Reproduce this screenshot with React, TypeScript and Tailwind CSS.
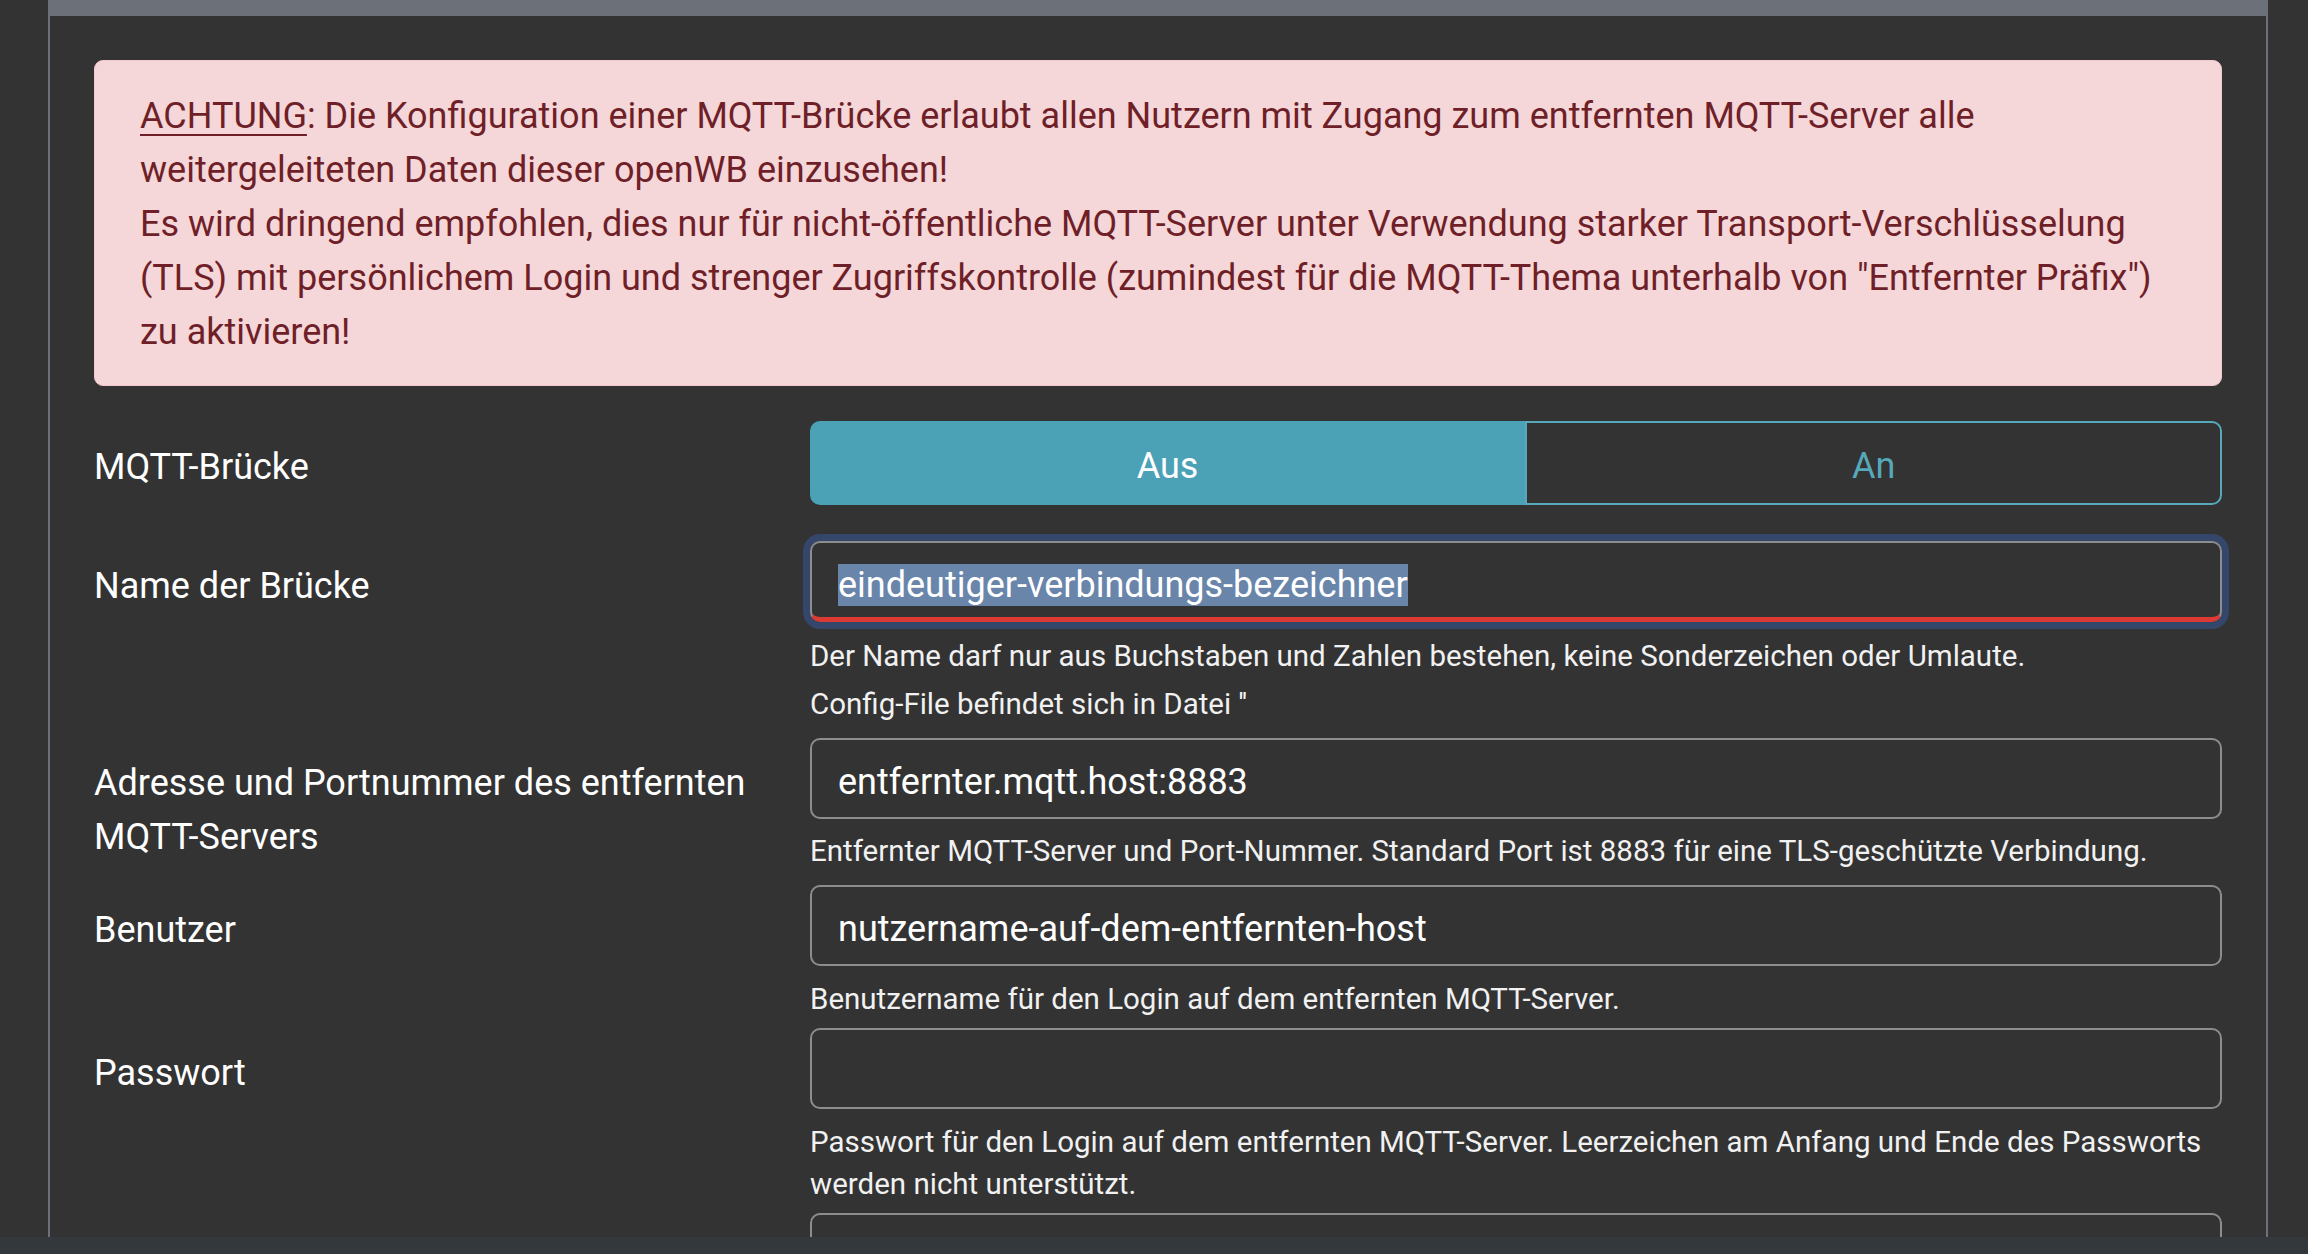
import React from "react";

function HelpText({ children, className = "" }: { children: React.ReactNode; className?: string }) {
  return <p className={`text-[29.5px] leading-[42px] text-[#f1f1f1] ${className}`}>{children}</p>;
}

function TextInput({ value, type = "text" }: { value?: string; type?: string }) {
  return (
    <input
      readOnly
      type={type}
      value={value}
      className="block h-[81px] w-full rounded-[10px] border-2 border-[#8d8d8d] bg-transparent px-[26px] pt-[7px] text-[36px] text-white outline-none"
    />
  );
}

function FormRow({
  label,
  labelPad = "pt-[18px]",
  className = "",
  children,
}: {
  label: React.ReactNode;
  labelPad?: string;
  className?: string;
  children: React.ReactNode;
}) {
  return (
    <div className={`grid grid-cols-[716px_1fr] ${className}`}>
      <label className={`pr-[30px] text-[36px] leading-[54px] text-white ${labelPad}`}>{label}</label>
      <div className="flex flex-col">{children}</div>
    </div>
  );
}

export default function App() {
  return (
    <div className="flex h-[1254px] flex-col overflow-hidden bg-[#333333] font-['Roboto',sans-serif]">
      <div className="flex-1 overflow-hidden">
        <div className="ml-[48px] h-full w-[2220px] border-x-2 border-[#6c7079] bg-[#333333]">
          <div className="h-[16px] bg-[#6c7079]" />
          <div className="px-[44px] pt-[44px]">
            <div className="rounded-[9px] border border-[#f3c9cd] bg-[#f5d6d9] px-[45px] pb-[26px] pt-[28px] text-[36px] leading-[54px] text-[#6f1f27]">
              <span className="underline decoration-2 underline-offset-[6px]">ACHTUNG</span>: Die Konfiguration einer
              MQTT-Brücke erlaubt allen Nutzern mit Zugang zum entfernten MQTT-Server alle weitergeleiteten Daten dieser
              openWB einzusehen!
              <br />
              Es wird dringend empfohlen, dies nur für nicht-öffentliche MQTT-Server unter Verwendung starker
              Transport-Verschlüsselung (TLS) mit persönlichem Login und strenger Zugriffskontrolle (zumindest für die
              MQTT-Thema unterhalb von "Entfernter Präfix") zu aktivieren!
            </div>

            <FormRow label="MQTT-Brücke" labelPad="pt-[19px]" className="mt-[35px]">
              <div className="flex h-[84px] w-full">
                <button className="flex-auto rounded-l-[10px] border-2 border-[#4ba2b6] bg-[#4ba2b6] pt-[6px] text-[36px] text-white">
                  Aus
                </button>
                <button className="flex-auto rounded-r-[10px] border-2 border-[#55a9ba] bg-transparent pt-[6px] text-[36px] text-[#55a9ba]">
                  An
                </button>
              </div>
            </FormRow>

            <FormRow label="Name der Brücke" className="mt-[36px]">
              <div className="flex h-[81px] items-center rounded-[10px] border-2 border-b-[5px] border-[#8d8d8d] border-b-[#dc3b33] px-[26px] pt-[9px] shadow-[0_0_0_7px_#34476a]">
                <span className="bg-[#6985aa] text-[36px] leading-[42px] text-white">
                  eindeutiger-verbindungs-bezeichner
                </span>
              </div>
              <HelpText className="mt-[13px]">
                Der Name darf nur aus Buchstaben und Zahlen bestehen, keine Sonderzeichen oder Umlaute.
              </HelpText>
              <HelpText className="mt-[6px]">Config-File befindet sich in Datei ''</HelpText>
            </FormRow>

            <FormRow label="Adresse und Portnummer des entfernten MQTT-Servers" className="mt-[13px]">
              <TextInput value="entfernter.mqtt.host:8883" />
              <HelpText className="mt-[11px]">
                Entfernter MQTT-Server und Port-Nummer. Standard Port ist 8883 für eine TLS-geschützte Verbindung.
              </HelpText>
            </FormRow>

            <FormRow label="Benutzer" className="mt-[13px]">
              <TextInput value="nutzername-auf-dem-entfernten-host" />
              <HelpText className="mt-[12px]">Benutzername für den Login auf dem entfernten MQTT-Server.</HelpText>
            </FormRow>

            <FormRow label="Passwort" className="mt-[8px]">
              <TextInput type="password" value="" />
              <HelpText className="mt-[12px]">
                Passwort für den Login auf dem entfernten MQTT-Server. Leerzeichen am Anfang und Ende des Passworts
                werden nicht unterstützt.
              </HelpText>
            </FormRow>

            <FormRow label="" className="mt-[8px]">
              <TextInput value="" />
            </FormRow>
          </div>
        </div>
      </div>
      <div className="h-[17px] shrink-0 bg-[#33383c]" />
    </div>
  );
}
